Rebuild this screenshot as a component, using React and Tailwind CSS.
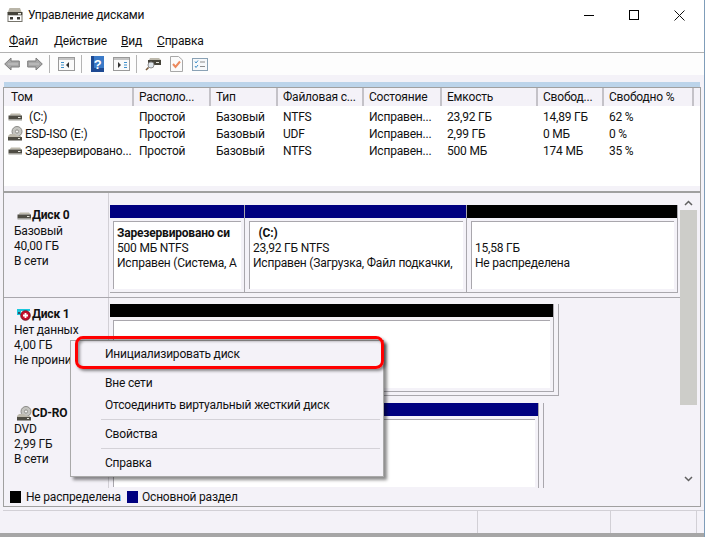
import React from 'react';

const columns = [
  { label: 'Том', w: 'w-[130px]' },
  { label: 'Располо...', w: 'w-[77px]' },
  { label: 'Тип', w: 'w-[67px]' },
  { label: 'Файловая с...', w: 'w-[86px]' },
  { label: 'Состояние', w: 'w-[78px]' },
  { label: 'Емкость', w: 'w-[96px]' },
  { label: 'Свобод...', w: 'w-[66px]' },
  { label: 'Свободно %', w: 'w-[90px]' },
];

const rows = [
  { icon: 'hdd', name: ' (C:)', cells: ['Простой', 'Базовый', 'NTFS', 'Исправен...', '23,92 ГБ', '14,89 ГБ', '62 %'] },
  { icon: 'cd', name: 'ESD-ISO (E:)', cells: ['Простой', 'Базовый', 'UDF', 'Исправен...', '2,99 ГБ', '0 МБ', '0 %'] },
  { icon: 'hdd', name: 'Зарезервировано...', cells: ['Простой', 'Базовый', 'NTFS', 'Исправен...', '500 МБ', '174 МБ', '35 %'] },
];

const AppIcon = () => (
  <svg width="16" height="14" viewBox="0 0 16 14" className="shrink-0">
    <path d="M2.5 0 H13 L15 5 H.5 Z" fill="#b9b5a8" />
    <rect x=".5" y="4" width="15" height="3.5" fill="#45433a" />
    <rect x="11" y="5" width="3" height="1.5" fill="#f0f0e8" />
    <rect x=".5" y="7.5" width="15" height="6.5" fill="#77756c" />
    <rect x="1.5" y="7.5" width="13" height="5.5" fill="#fff" />
    <rect x="3" y="9" width="3" height="2.5" fill="#3b3a34" />
    <rect x="10" y="9" width="3" height="2.5" fill="#3b3a34" />
  </svg>
);

const HddIcon = () => (
  <svg width="16" height="16" viewBox="0 0 16 16" className="shrink-0">
    <path d="M2.5 6.5 L4 4.5 H13 L14.5 6.5 Z" fill="#bdb9ac" />
    <rect x="1.5" y="6.5" width="13.5" height="4" fill="#4f4d44" />
    <rect x="11" y="8" width="2.5" height="1" fill="#e4e4dc" />
    <rect x="1.5" y="10.5" width="13.5" height="1" fill="#9a9a92" />
  </svg>
);

const CdIcon = () => (
  <svg width="16" height="16" viewBox="0 0 16 16" className="shrink-0">
    <circle cx="10" cy="5.5" r="5" fill="#c4c4c0" stroke="#8a8a86" />
    <circle cx="10" cy="5.5" r="1.6" fill="#f4f4f4" stroke="#77776f" strokeWidth="0.7" />
    <path d="M1 10 L3 8 H8 L10 10 H14 V11 H1 Z" fill="#bdb9ac" />
    <rect x="1" y="11" width="14" height="3.5" fill="#4f4d44" />
    <rect x="11" y="12" width="2" height="1" fill="#e4e4dc" />
  </svg>
);

const ErrorDiskIcon = () => (
  <svg width="16" height="16" viewBox="0 0 16 16" className="shrink-0">
    <rect x="1" y="2" width="13" height="2" fill="#19c7dc" />
    <rect x="1" y="4" width="4" height="4" fill="#19c7dc" />
    <rect x="2" y="5" width="2" height="2" fill="#35506a" />
    <circle cx="9.5" cy="8.5" r="4.8" fill="#c8102e" stroke="#5c0f18" strokeWidth="0.8" />
    <path d="M7 8.5 H12 M9.5 6 V11" stroke="#fff" strokeWidth="1.8" />
  </svg>
);

const WindowIcon = ({ children }) => (
  <svg width="17" height="14" viewBox="0 0 17 14" className="shrink-0">
    <rect x=".5" y=".5" width="16" height="13" fill="#fafafa" stroke="#9a9a9a" />
    <rect x="1" y="1" width="15" height="2" fill="#c4c4c4" />
    {children}
  </svg>
);

const Sep = ({ className }) => <div className={`w-px h-[18px] bg-[#b4b4b4] ${className}`} />;

const Toolbar = () => (
  <div className="h-[22px] bg-[#fdfdfd] flex items-center pl-[4px]">
    <svg width="16" height="14" viewBox="0 0 16 14" className="shrink-0"><path d="M.7 7 L7 1 V4 H15.3 V10 H7 V13 Z" fill="#a8a8a8" stroke="#7d7d7d" /><path d="M4 7 H14" stroke="#c8c8c8" /></svg>
    <svg width="16" height="14" viewBox="0 0 16 14" className="shrink-0 ml-[7px]"><path d="M15.3 7 L9 1 V4 H.7 V10 H9 V13 Z" fill="#a8a8a8" stroke="#7d7d7d" /><path d="M2 7 H12" stroke="#c8c8c8" /></svg>
    <Sep className="ml-[6px] mr-[8px]" />
    <WindowIcon>
      <path d="M3 5.5 H6 M3 8 H6 M3 10.5 H6" stroke="#3f8fc9" />
      <path d="M11 5 V11 L8 8 Z" fill="#333" />
    </WindowIcon>
    <Sep className="ml-[6px] mr-[9px]" />
    <svg width="13" height="16" viewBox="0 0 13 16" className="shrink-0">
      <rect width="13" height="16" fill="#3a7ac8" />
      <rect width="3" height="16" fill="#1e4a93" />
      <rect y="12" width="13" height="4" fill="#1e4a93" />
      <text x="6.5" y="12.5" textAnchor="middle" fontSize="13" fontWeight="700" fontFamily="Liberation Sans" fill="#fff">?</text>
    </svg>
    <div className="ml-[9px] flex">
      <WindowIcon>
        <path d="M5 5 V11 L8 8 Z" fill="#333" />
        <path d="M11 5.5 H14 M11 8 H14 M11 10.5 H14" stroke="#3f8fc9" />
      </WindowIcon>
    </div>
    <Sep className="ml-[6px] mr-[8px]" />
    <svg width="16" height="14" viewBox="0 0 16 14" className="shrink-0">
      <path d="M4 3 L5 1 H14 L16 3 Z" fill="#bdb9ac" />
      <rect x="3" y="3" width="13" height="5" fill="#45433a" />
      <rect x="11" y="5" width="3" height="1" fill="#e4e4dc" />
      <circle cx="6" cy="8" r="3" fill="#dfe6ec" stroke="#8d8d8d" />
      <path d="M3.5 10.5 L1 13" stroke="#7a5a3a" strokeWidth="1.6" />
    </svg>
    <svg width="13" height="16" viewBox="0 0 13 16" className="shrink-0 ml-[9px]">
      <path d="M.5 .5 H8.5 L12.5 4 V15.5 H.5 Z" fill="#fbfbfb" stroke="#a8a8a8" />
      <path d="M3 8 L5.5 11 L10 5.5" fill="none" stroke="#ec8a5e" strokeWidth="2" />
    </svg>
    <svg width="16" height="13" viewBox="0 0 16 13" className="shrink-0 ml-[9px]">
      <rect x=".5" y=".5" width="15" height="12" fill="#f7f9fb" stroke="#8aa2b5" />
      <path d="M3 3.5 L4 5 L6 2.5 M3 8 L4 9.5 L6 7" fill="none" stroke="#3f8fc9" />
      <path d="M8 4 H13 M8 8.5 H13" stroke="#8d8d8d" />
    </svg>
  </div>
);

const Partition = ({ width, color, title, lines, spacer = false, inset = 'ml-[3px]' }) => (
  <div className={`${width} h-[88px] flex flex-col shrink-0 border-r border-b border-[#a9a7ad] pb-[3px]`}>
    <div className={`h-[13px] ${color} shrink-0`} />
    <div className={`flex-1 mt-[3px] ${inset} mr-[3px] bg-white border-t border-l border-[#a9a7ad] pl-[3px] pt-[4px] overflow-hidden leading-[15px] whitespace-nowrap`}>
      {title && <div className="font-bold">{title}</div>}
      {spacer && <div className="h-[15px]" />}
      {lines?.map((l) => <div key={l}>{l}</div>)}
    </div>
  </div>
);

const DiskLabel = ({ icon, name, lines, top }) => (
  <div className={`w-[105px] shrink-0 pl-[10px] leading-[15px] whitespace-nowrap overflow-hidden self-stretch border-r border-[#d2d0d6] ${top}`}>
    <div className="flex items-start font-bold h-[16px] pl-[2px]">
      <span className="w-[16px] h-[15px] shrink-0 flex items-center">{icon}</span>
      <span>{name}</span>
    </div>
    {lines.map((l) => <div key={l}>{l}</div>)}
  </div>
);

export default function App() {
  return (
    <div className="relative w-[705px] h-[537px] overflow-hidden bg-[#f4f2f8] text-[12px] tracking-[-0.2px] text-[#111] font-['Roboto',sans-serif] border-r border-[#7f9db9]">
      {/* title */}
      <div className="h-[30px] bg-white flex items-center pl-[7px]">
        <AppIcon />
        <span className="ml-[5px]">Управление дисками</span>
        <div className="ml-auto flex items-center">
          <div className="w-[10px] h-px bg-black mr-[35px]" />
          <div className="w-[10px] h-[10px] border border-black mr-[35px]" />
          <svg width="11" height="11" viewBox="0 0 11 11" className="mr-[19px]"><path d="M.5 .5 L10.5 10.5 M10.5 .5 L.5 10.5" stroke="#111" /></svg>
        </div>
      </div>

      {/* menu */}
      <div className="h-[23px] bg-white border-b border-[#b2b2b2] flex items-center pl-[9px] pb-[1px]">
        <span className="w-[45px]"><u>Ф</u>айл</span>
        <span className="w-[67px]"><u>Д</u>ействие</span>
        <span className="w-[36px]"><u>В</u>ид</span>
        <span><u>С</u>правка</span>
      </div>

      <Toolbar />

      <div className="h-[7px]" />
      <div className="h-[5px] mx-[4px] bg-[#bcd4ea]" />

      {/* volumes + disks */}
      <div className="mx-[3px] border-l border-r border-[#a0a0a0]">
        <div className="flex h-[19px] bg-[#f4f2f8] border-t border-[#a0a0a0]">
          {columns.map((c, i) => (
            <div key={c.label} className={`${c.w} shrink-0 flex items-center border-r-2 border-[#c4c2c8] whitespace-nowrap ${i === 0 ? 'pl-[7px]' : 'pl-[5px]'}`}>
              {c.label}
            </div>
          ))}
        </div>
        <div className="h-[80px] bg-white pt-[2px]">
          {rows.map((r) => (
            <div key={r.name} className="flex h-[17px] items-center whitespace-nowrap">
              <div className="w-[130px] shrink-0 flex items-center pl-[3px] overflow-hidden">
                {r.icon === 'hdd' ? <HddIcon /> : <CdIcon />}
                <span className={r.name.startsWith(' ') ? 'ml-[6px]' : 'ml-[2px]'}>{r.name.trim()}</span>
              </div>
              {r.cells.map((c, i) => (
                <div key={i} className={`${columns[i + 1].w} shrink-0 pl-[5px]`}>{c}</div>
              ))}
            </div>
          ))}
        </div>
        <div className="h-[7px] border-b-2 border-[#a0a0a0]" />

        <div className="flex h-[295px]">
          <div className="w-[676px] shrink-0 flex flex-col overflow-hidden">
            {/* Disk 0 */}
            <div className="h-[105px] shrink-0 flex border-b border-[#a9a7ad]">
              <DiskLabel top="pt-[15px]" icon={<HddIcon />} name="Диск 0" lines={['Базовый', '40,00 ГБ', 'В сети']} />
              <div className="flex pt-[12px] ml-[1px]">
                <Partition width="w-[135px]" color="bg-[#000080]" title="Зарезервировано си" lines={['500 МБ NTFS', 'Исправен (Система, А']} />
                <Partition width="w-[222px]" inset="ml-[4px]" color="bg-[#000080]" title={'\u00a0\u00a0(C:)'} lines={['23,92 ГБ NTFS', 'Исправен (Загрузка, Файл подкачки,']} />
                <Partition width="w-[211px]" inset="ml-[4px]" color="bg-black" spacer lines={['15,58 ГБ', 'Не распределена']} />
              </div>
            </div>
            {/* Disk 1 */}
            <div className="h-[100px] shrink-0 flex">
              <DiskLabel top="pt-[9px]" icon={<ErrorDiskIcon />} name="Диск 1" lines={['Нет данных', '4,00 ГБ', 'Не проини']} />
              <div className="pt-[6px] ml-[1px] flex items-start">
                <div className="pr-[4px] pb-[3px] border-r border-b border-[#a9a7ad] flex">
                  <Partition width="w-[444px]" color="bg-black" />
                </div>
              </div>
            </div>
            {/* CD-ROM */}
            <div className="flex-1 flex min-h-0">
              <DiskLabel top="pt-[8px]" icon={<CdIcon />} name="CD-RO" lines={['DVD', '2,99 ГБ', 'В сети']} />
              <div className="pt-[5px] ml-[1px] flex items-start">
                <div className="pr-[4px] pb-[3px] border-r border-b border-[#a9a7ad] flex">
                  <Partition width="w-[429px]" color="bg-[#000080]" />
                </div>
              </div>
            </div>
          </div>
          {/* scrollbar */}
          <div className="w-[17px] shrink-0 flex flex-col items-center bg-[#f4f2f8]">
            <svg width="9" height="6" viewBox="0 0 9 6" className="mt-[7px]"><path d="M1 5 L4.5 1.5 L8 5" fill="none" stroke="#606060" strokeWidth="1.5" /></svg>
            <div className="w-full h-[195px] mt-[4px] bg-[#cdcdc9]" />
            <svg width="9" height="6" viewBox="0 0 9 6" className="mt-auto mb-[6px]"><path d="M1 1 L4.5 4.5 L8 1" fill="none" stroke="#606060" strokeWidth="1.5" /></svg>
          </div>
        </div>

        {/* legend */}
        <div className="h-[19px] flex items-center pl-[6px] border-b border-[#a0a0a0]">
          <span className="w-[11px] h-[12px] bg-black" />
          <span className="ml-[5px] w-[101px] whitespace-nowrap">Не распределена</span>
          <span className="w-[11px] h-[12px] bg-[#000080]" />
          <span className="ml-[4px]">Основной раздел</span>
        </div>
      </div>

      {/* status bar */}
      <div className="mt-[3px] h-[23px] border-t border-[#d2d0d6] ml-[3px] flex">
        <div className="w-[475px] border-r border-[#d2d0d6]" />
        <div className="w-[133px] border-r border-[#d2d0d6]" />
        <div className="w-[86px] border-r border-[#d2d0d6]" />
      </div>
      <div className="h-[4px] bg-[#a6a6a6]" />

      {/* context menu */}
      <div className="absolute left-[70px] top-[340px] w-[314px] h-[137px] bg-[#f4f2f8] border border-[#a9a9a9] shadow-[3px_3px_3px_rgba(0,0,0,0.45)] pl-[34px]">
        <div className="h-[25px] flex items-center">Инициализировать диск</div>
        <div className="h-[22px] mt-[6px] flex items-center">Вне сети</div>
        <div className="h-[22px] flex items-center">Отсоединить виртуальный жесткий диск</div>
        <div className="h-px bg-[#d4d2d8] -ml-[4px] mr-[3px] mt-[3px]" />
        <div className="h-[22px] mt-[3px] flex items-center">Свойства</div>
        <div className="h-px bg-[#d4d2d8] -ml-[4px] mr-[3px] mt-[3px]" />
        <div className="h-[22px] mt-[3px] flex items-center">Справка</div>
      </div>
      <div className="absolute left-[75px] top-[336px] w-[309px] h-[33px] rounded-[8px] border-[3px] border-[#ff0000] shadow-[inset_2px_2px_3px_rgba(0,0,0,0.4),2px_2px_3px_rgba(0,0,0,0.45)]" />
    </div>
  );
}
